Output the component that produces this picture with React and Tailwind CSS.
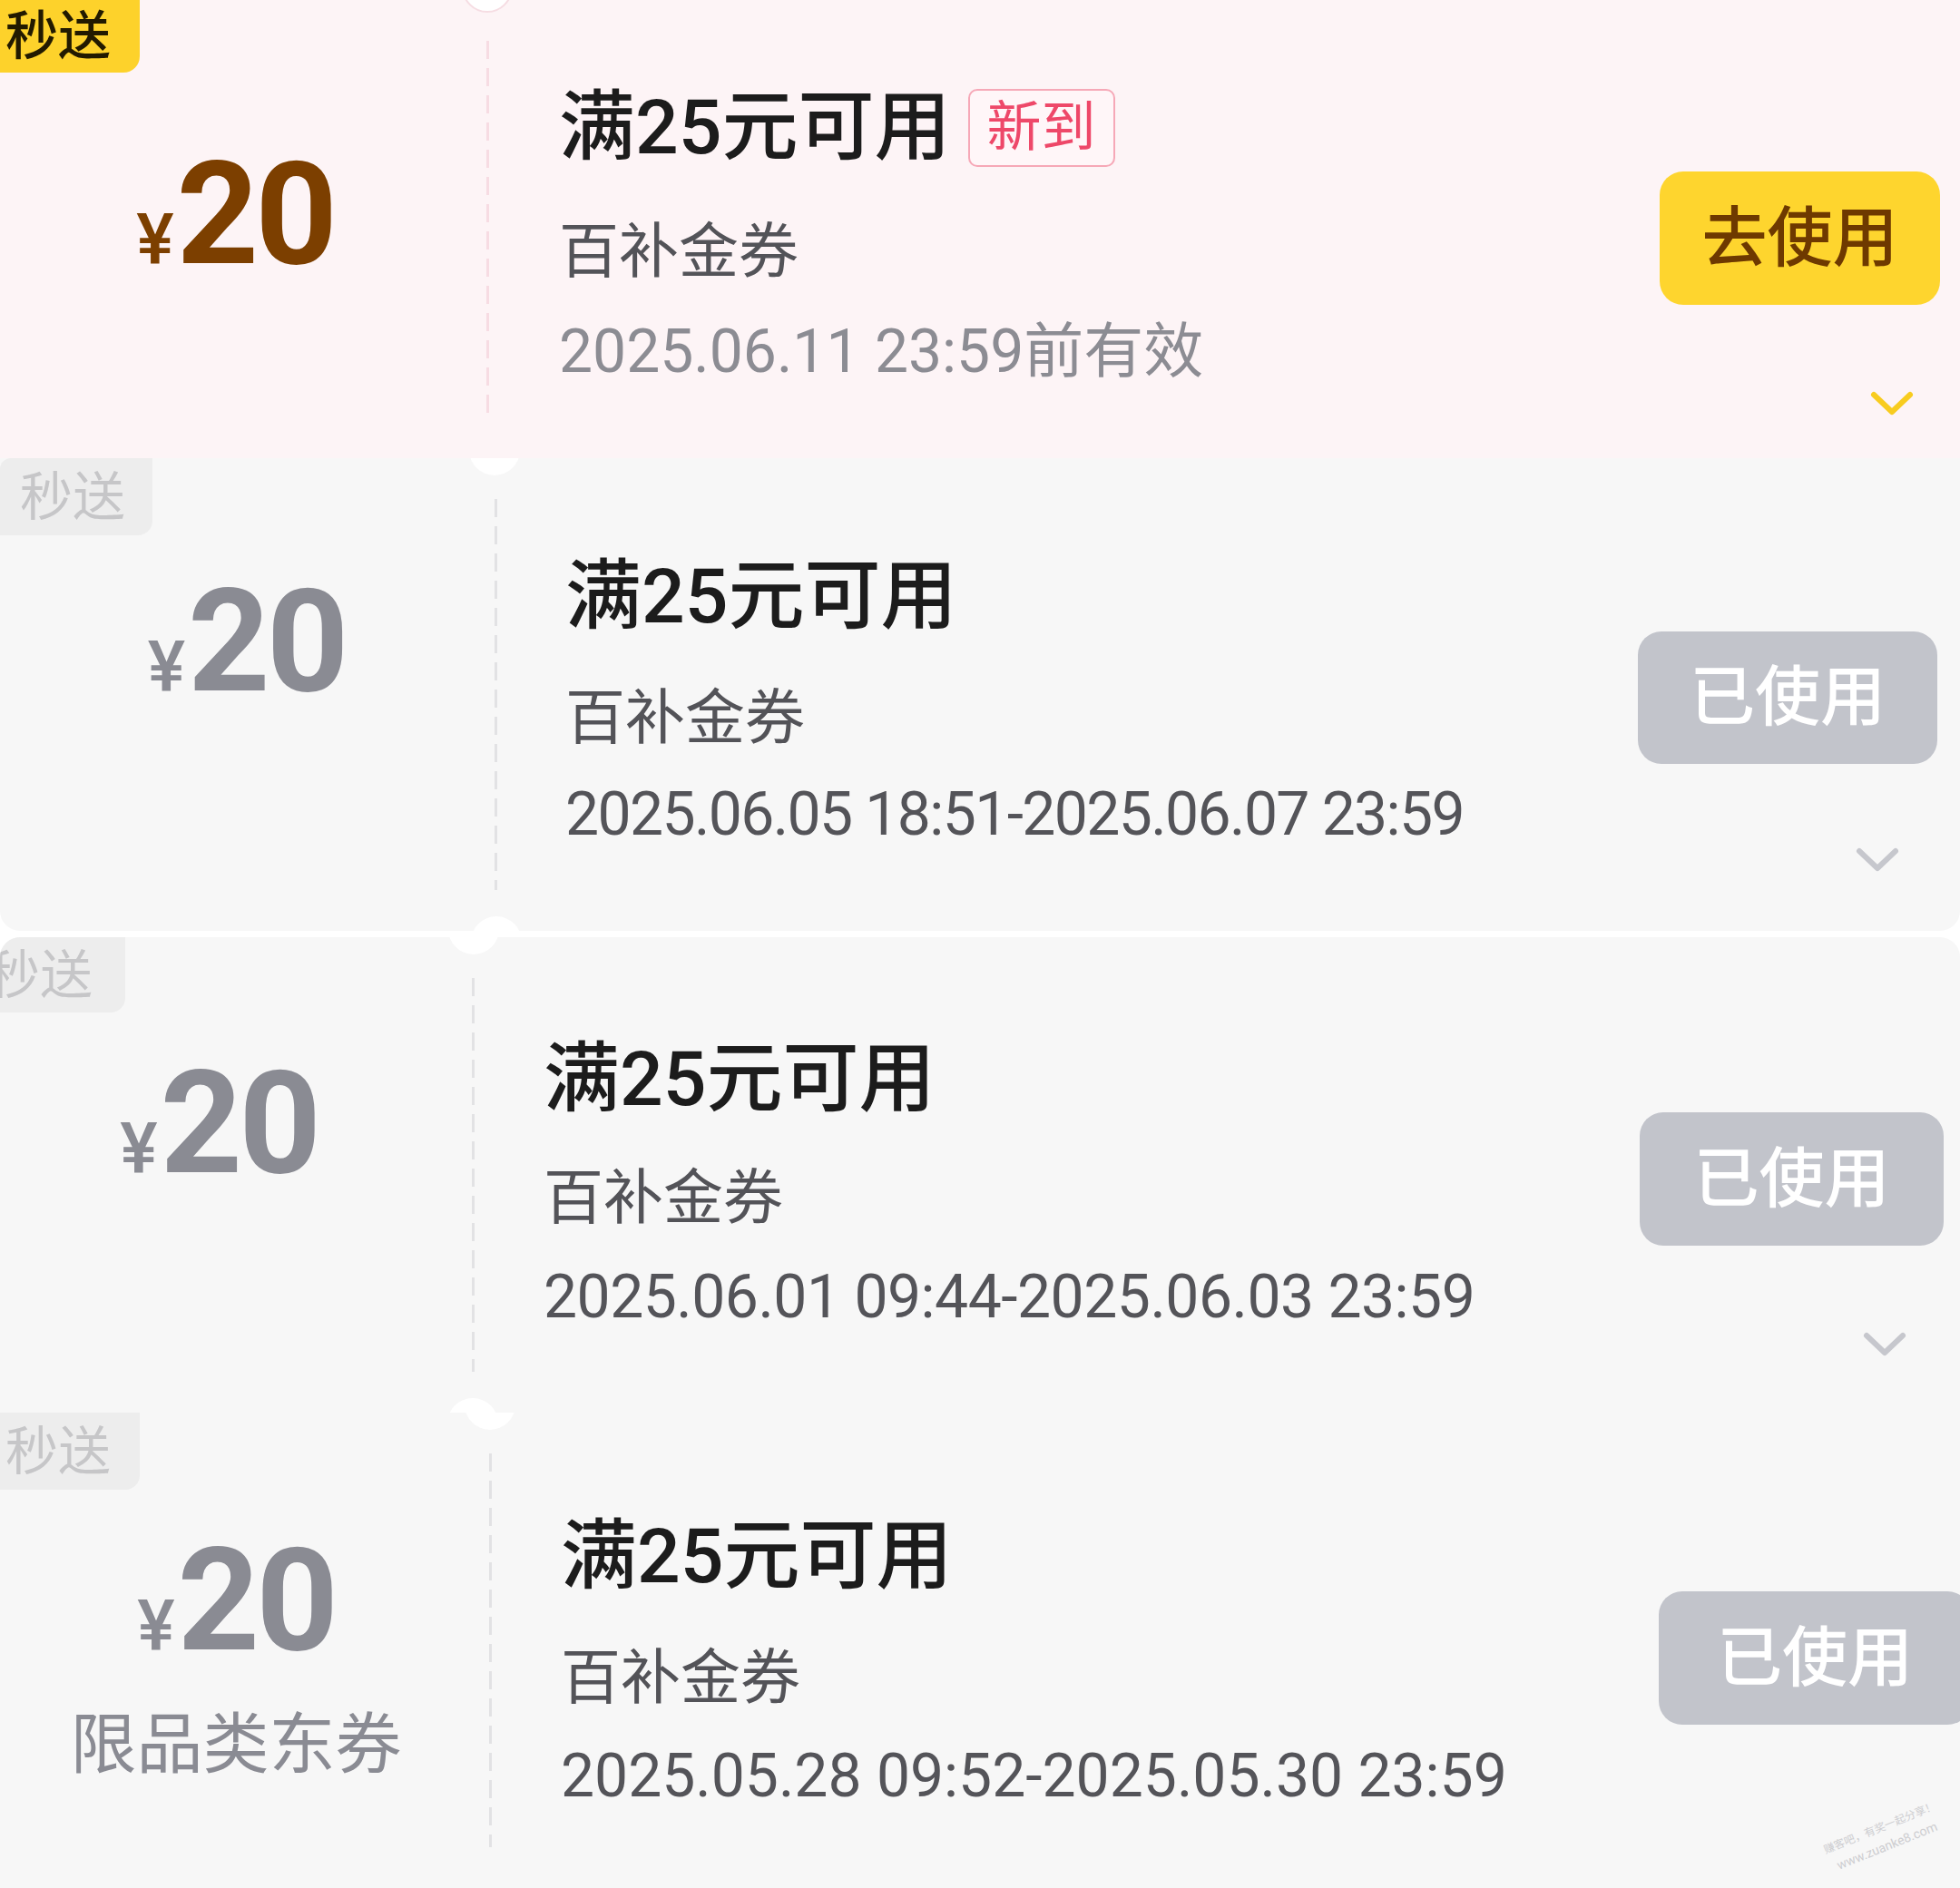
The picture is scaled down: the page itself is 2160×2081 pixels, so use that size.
const cjk = "font-['Roboto','Noto_Sans_CJK_SC',sans-serif]";

const coupons = [
  {
    id: "c1",
    active: true,
    wrap: "h-[505px] bg-[#fdf4f6]",
    badge: "w-[154px] h-[80px] bg-[#fdd22b] rounded-br-[18px] text-[#221a00] pl-[6px]",
    badgeText: "font-medium",
    notchTop: "left-[509px] top-[-42px] border-2 border-[#f6dde3]",
    notchBottom: null,
    left: "w-[536px] pt-[157px] pr-[18px]",
    dash: "bg-[repeating-linear-gradient(to_bottom,#f7dce3_0px,#f7dce3_20px,transparent_20px,transparent_30px)]",
    info: "pl-[77px] pt-[99px]",
    row2: "mt-[62px]",
    row3: "mt-[44px] text-[#8c8c93]",
    date: "2025.06.11 23:59前有效",
    action: "pt-[189px] pr-[22px]",
    btn: "w-[309px] h-[147px] bg-[#fed52e] text-[#6e3900]",
    btnText: "去使用",
    chevron: "mt-[94px] mr-[28px] text-[#f8cc1f]",
  },
  {
    id: "c2",
    active: false,
    wrap: "h-[521px] bg-[#f7f7f7] rounded-bl-[22px] rounded-br-[22px]",
    badge: "w-[168px] h-[85px] bg-[#ededed] rounded-br-[16px] rounded-tl-[12px] text-[#c6c6c8] pl-[22px]",
    badgeText: "",
    notchTop: "left-[517px] top-[-37px]",
    notchBottom: "left-[519px] bottom-[-40px]",
    left: "w-[545px] pt-[123px] pr-[2px]",
    dash: "bg-[repeating-linear-gradient(to_bottom,#e2e2e4_0px,#e2e2e4_20px,transparent_20px,transparent_30px)]",
    info: "pl-[75px] pt-[111px]",
    row2: "mt-[59px]",
    row3: "mt-[40px] text-[#545459] tracking-[-1.6px]",
    date: "2025.06.05 18:51-2025.06.07 23:59",
    action: "pt-[191px] pr-[25px]",
    btn: "w-[330px] h-[146px] bg-[#c2c4cb] text-white",
    btnText: "已使用",
    chevron: "mt-[91px] mr-[41px] text-[#c6c7cd]",
  },
  {
    id: "c3",
    active: false,
    wrap: "h-[524px] mt-[7px] bg-[#f7f7f7] rounded-tl-[22px] rounded-tr-[22px]",
    badge: "w-[138px] h-[83px] bg-[#ededed] rounded-br-[16px] text-[#c6c6c8]",
    badgeText: "ml-[-14px]",
    notchTop: "left-[494px] top-[-37px]",
    notchBottom: "left-[493px] bottom-[-40px]",
    left: "w-[520px] pt-[126px] pr-[38px]",
    dash: "bg-[repeating-linear-gradient(to_bottom,#e2e2e4_0px,#e2e2e4_20px,transparent_20px,transparent_30px)]",
    info: "pl-[76px] pt-[115px]",
    row2: "mt-[56px]",
    row3: "mt-[43px] text-[#545459] tracking-[-0.5px]",
    date: "2025.06.01 09:44-2025.06.03 23:59",
    action: "pt-[193px] pr-[18px]",
    btn: "w-[335px] h-[147px] bg-[#c2c4cb] text-white",
    btnText: "已使用",
    chevron: "mt-[94px] mr-[40px] text-[#c6c7cd]",
  },
  {
    id: "c4",
    active: false,
    wrap: "flex-1 bg-[#f7f7f7]",
    badge: "w-[154px] h-[85px] bg-[#ededed] rounded-br-[16px] text-[#c6c6c8] pl-[6px]",
    badgeText: "",
    notchTop: "left-[512px] top-[-37px]",
    notchBottom: null,
    left: "w-[539px] pt-[128px] pr-[19px]",
    dash: "bg-[repeating-linear-gradient(to_bottom,#e2e2e4_0px,#e2e2e4_20px,transparent_20px,transparent_30px)]",
    info: "pl-[76px] pt-[117px]",
    row2: "mt-[59px]",
    row3: "mt-[42px] text-[#545459]",
    date: "2025.05.28 09:52-2025.05.30 23:59",
    action: "pt-[197px] pr-0",
    btn: "w-[344px] h-[147px] mr-[-12px] bg-[#c2c4cb] text-white",
    btnText: "已使用",
    chevron: null,
    sub: "限品类东券",
  },
];

function Chevron({ className }) {
  return (
    <svg className={className} width="50" height="30" viewBox="0 0 50 30" fill="none">
      <polyline points="5,5 25,24 45,5" stroke="currentColor" strokeWidth="6" strokeLinecap="round" strokeLinejoin="round" />
    </svg>
  );
}

function Coupon({ c }) {
  return (
    <div className={`relative flex overflow-hidden shrink-0 ${c.wrap}`}>
      {/* 秒送 tag */}
      <div className={`absolute top-0 left-0 flex items-center overflow-hidden ${c.badge}`}>
        <span className={`${cjk} text-[58px] leading-none ${c.badgeText}`}>秒送</span>
      </div>

      {/* notches */}
      <div className={`absolute w-[56px] h-[56px] rounded-full bg-white ${c.notchTop}`} />
      {c.notchBottom && <div className={`absolute w-[56px] h-[56px] rounded-full bg-white ${c.notchBottom}`} />}

      {/* amount */}
      <div className={`shrink-0 flex flex-col items-center ${c.left}`}>
        <div className={`flex items-baseline font-['Roboto',sans-serif] leading-none ${c.active ? "text-[#7c3f00]" : "text-[#8a8b93]"}`}>
          <span className="text-[78px] font-medium">¥</span>
          <span className="text-[158px] font-bold tracking-[-4px] ml-[3px]">20</span>
        </div>
        {c.sub && <div className={`${cjk} mt-[44px] text-[73px] leading-none text-[#8a8b93]`}>{c.sub}</div>}
      </div>

      {/* dashed divider */}
      <div className={`w-[3px] shrink-0 my-[45px] ${c.dash}`} />

      {/* info */}
      <div className={`flex-1 flex flex-col ${cjk} ${c.info}`}>
        <div className="flex items-center h-[84px]">
          <span className="text-[84px] leading-none font-medium text-[#1c1c1c]">满25元可用</span>
          {c.active && (
            <span className="ml-[19px] h-[86px] px-[19px] flex items-center rounded-[10px] border-2 border-[#f6a8b7] bg-[#fff6f8] text-[60px] leading-none text-[#ee4869]">
              新到
            </span>
          )}
        </div>
        <div className={`text-[66px] leading-none text-[#535358] ${c.row2}`}>百补金券</div>
        <div className={`text-[66px] leading-none whitespace-nowrap ${c.row3}`}>{c.date}</div>
      </div>

      {/* action */}
      <div className={`shrink-0 flex flex-col items-end ${c.action}`}>
        <div className={`flex items-center justify-center rounded-[26px] ${cjk} text-[72px] font-medium leading-none ${c.btn}`}>
          {c.btnText}
        </div>
        {c.chevron && <Chevron className={c.chevron} />}
      </div>
    </div>
  );
}

export default function App() {
  return (
    <div className="relative w-[2160px] h-[2081px] bg-white overflow-hidden flex flex-col">
      {coupons.map((c) => (
        <Coupon key={c.id} c={c} />
      ))}

      {/* watermark */}
      <div className="absolute left-[2010px] top-[2005px] rotate-[-22deg] flex flex-col items-center gap-[2px] text-[#c4c4c8] font-['Roboto','Noto_Sans_CJK_SC',sans-serif] leading-normal opacity-80">
        <span className="text-[12px]">赚客吧，有奖一起分享！</span>
        <span className="text-[14px]">www.zuanke8.com</span>
      </div>
    </div>
  );
}
